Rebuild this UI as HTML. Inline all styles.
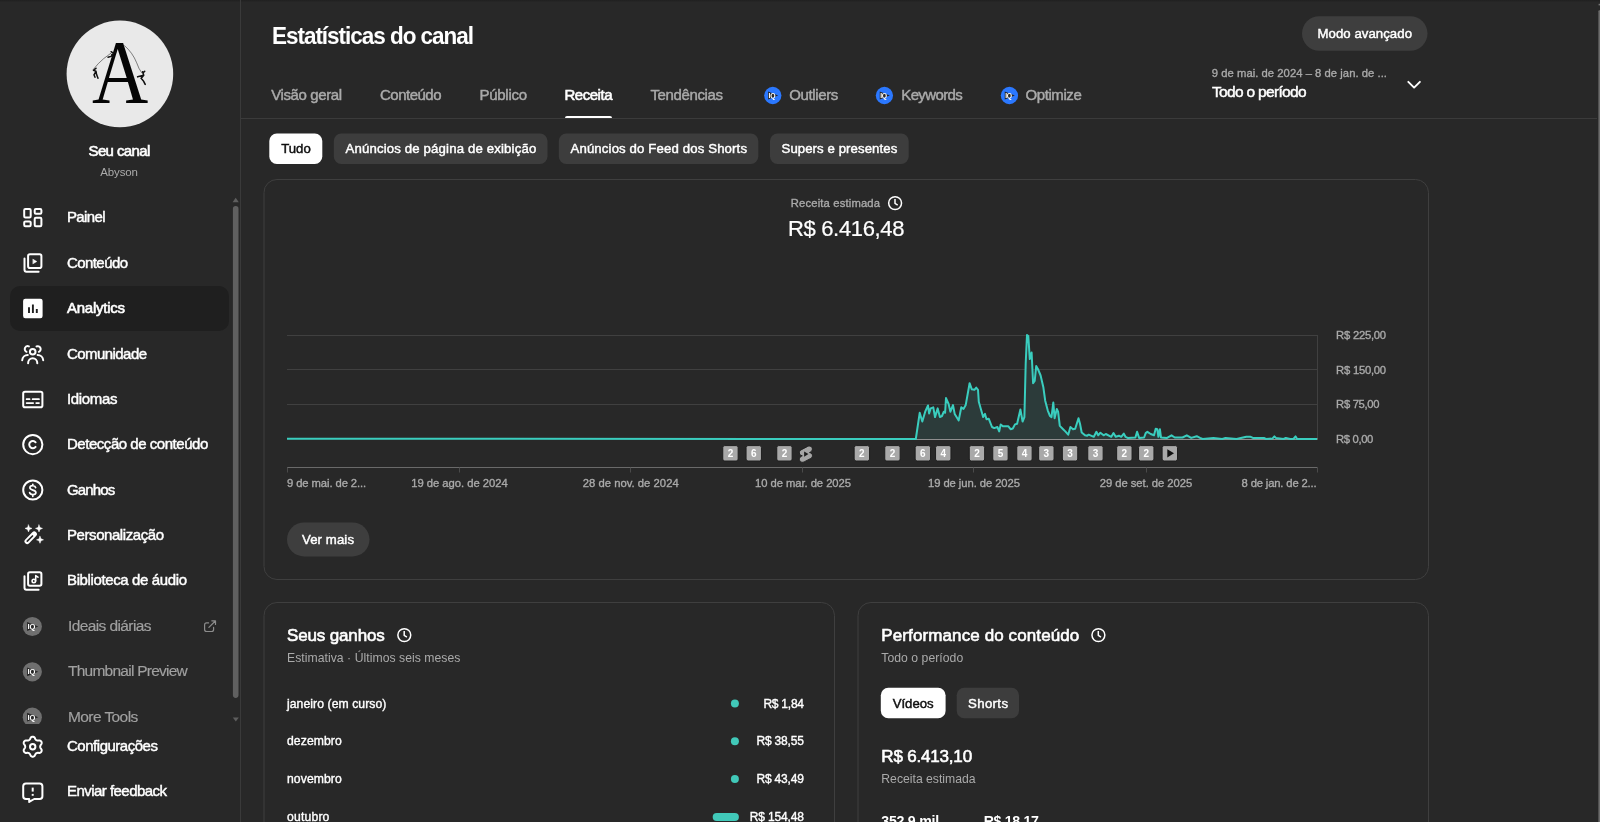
<!DOCTYPE html>
<html lang="pt-BR">
<head>
<meta charset="utf-8">
<title>Estatísticas do canal</title>
<style>
*{box-sizing:border-box;margin:0;padding:0}
html,body{width:1600px;height:822px;overflow:hidden;background:#282828;color:#fff;font-family:"Liberation Sans",sans-serif}
body{position:relative}
#wrap{position:absolute;left:0;top:0;width:1600px;height:822px;overflow:hidden;will-change:transform}
.abs{position:absolute}
.t{position:absolute;white-space:nowrap}
.chip{position:absolute;border-radius:8px;background:#3d3d3d}
.card{position:absolute;border:1px solid #3f3f3f;border-radius:12px}
svg{position:absolute;left:0;top:0;overflow:visible}
.mk rect{fill:#a9a9a9;stroke:#1e1e1e;stroke-width:1}
.mk text{fill:#fff;font-family:"Liberation Sans",sans-serif;font-weight:bold;font-size:10px;text-anchor:middle}
</style>
</head>
<body>
<div id="wrap">

<!-- top shadow -->
<div class="abs" style="left:0;top:0;width:1600px;height:2px;background:linear-gradient(#202020,#272727)"></div>
<!-- page scrollbar -->
<svg width="1600" height="822"><rect x="1598.4" y="10.2" width="3" height="830" rx="1" fill="#6c6c6c"/><rect x="1598.6" y="3.8" width="1.4" height="1.6" fill="#777"/></svg>

<!-- SIDEBAR -->
<div class="abs" style="left:240px;top:0;width:1px;height:822px;background:#3a3a3a"></div>
<div class="abs" style="left:10px;top:286px;width:219px;height:45px;border-radius:10px;background:#1f1f1f"></div>
<svg width="240" height="140"><circle cx="119.9" cy="73.9" r="53.3" fill="#e9e9e9"/></svg>
<div class="abs" style="left:66.6px;top:20.6px;width:106.6px;height:106.6px;border-radius:50%;overflow:hidden">
  <div class="t" style="left:13.4px;top:2.2px;width:80px;text-align:center;font-family:'Liberation Serif',serif;font-size:90px;line-height:100px;color:#050505;transform:scaleX(0.865);transform-origin:50% 50%">A</div>
  <svg width="107" height="107" viewBox="66.6 20.4 106.6 106.6" fill="none" stroke="#111" stroke-linecap="round">
    <path d="M92.5 69 Q98 62 103 58 Q107 55 111 52" stroke-width="0.5"/>
    <path d="M124 45 Q132 52 136 62 Q138 68 141 72" stroke-width="0.5"/>
    <path d="M93 69.5 l2.5 1 l0.5 3 l1.5 4 M95.5 70.5 l-2 3.5 l1 2.5 M94 68.5 l1.5 -1" stroke-width="1.5"/>
    <path d="M110.5 51 l2.5 1.5 l-2 3 l-3.5 1 M113 52.5 l2.5 -1.5 M111 54 l2 2.5" stroke-width="1.4"/>
    <path d="M142 71 l1 3.5 l-2.5 3 l2.5 3 l1.5 3 M143 74.5 l-6 1.5 M142.5 72 l1.5 -1.5" stroke-width="1.6"/>
  </svg>
</div>

<!-- sidebar scrollbar -->
<svg width="240" height="822">
  <rect x="232.9" y="205.9" width="5.6" height="492" rx="2.8" fill="#606060"/>
  <path d="M232.6 202.3 L235.7 197.7 L238.8 202.3 Z" fill="#5e5e5e"/>
  <path d="M232.8 717.4 L238.8 717.4 L235.8 721.6 Z" fill="#5e5e5e"/>
</svg>

<!-- sidebar icons -->
<svg width="240" height="822" fill="none" stroke="#fff" stroke-width="2" stroke-linejoin="round" stroke-linecap="round">
  <!-- painel -->
  <rect x="24.2" y="209" width="6.5" height="8.5" rx="1.2"/>
  <rect x="34.7" y="209" width="6.7" height="4.8" rx="1.2"/>
  <rect x="24.2" y="221.4" width="6.5" height="4.8" rx="1.2"/>
  <rect x="34.7" y="217.7" width="6.7" height="8.5" rx="1.2"/>
  <!-- conteudo -->
  <rect x="28.1" y="254.2" width="13.3" height="13.8" rx="1.8"/>
  <path d="M24.5 258.4 V269.7 a2 2 0 0 0 2 2 H38.6"/>
  <path d="M33.1 259.3 L36.8 261.5 L33.1 263.7 Z" fill="#fff" stroke-width="0.5"/>
  <!-- analytics -->
  <rect x="23.1" y="298.8" width="19.5" height="19.4" rx="2.2" fill="#fff" stroke="none"/>
  <path d="M29 313 V307.2 M32.9 313 V304.6 M36.8 313 V309" stroke="#1f1f1f" stroke-width="1.9" stroke-linecap="butt"/>
  <!-- comunidade -->
  <circle cx="32.7" cy="351.7" r="2.8"/>
  <path d="M28.1 363.2 a4.6 5 0 0 1 9.2 0"/>
  <path d="M28.9 346.4 a2.9 2.9 0 1 0 -2.4 5.4"/>
  <path d="M36.5 346.4 a2.9 2.9 0 1 1 2.4 5.4"/>
  <path d="M22.2 360.2 a5.6 5.6 0 0 1 5.6 -5.2"/>
  <path d="M43.2 360.2 a5.6 5.6 0 0 0 -5.6 -5.2"/>
  <!-- idiomas -->
  <rect x="23.2" y="391.7" width="19.2" height="15.5" rx="1.8"/>
  <path d="M26.6 399.2 H29.6 M32.6 399.2 H39 M26.6 403.1 H33.2 M36.2 403.1 H39" stroke-width="1.7"/>
  <!-- copyright -->
  <circle cx="32.8" cy="444.6" r="9.6"/>
  <path d="M35.6 442.3 a3.6 3.6 0 1 0 0 4.6"/>
  <!-- ganhos -->
  <circle cx="32.8" cy="490" r="9.6"/>
  <path d="M35.6 487.6 c-0.4 -1.4 -1.8 -1.9 -2.9 -1.9 c-1.6 0 -2.8 0.8 -2.8 2.1 c0 3 6 1.6 6 4.7 c0 1.4 -1.4 2.2 -3.1 2.2 c-1.5 0 -2.8 -0.7 -3.2 -2.1 M32.8 484.3 V485.6 M32.8 494.8 V496.3" stroke-width="1.7"/>
  <!-- personalizacao -->
  <path d="M27.2 541.3 L34.2 534.2" stroke-width="5.4"/>
  <path d="M27.3 541.2 L32.5 536" stroke="#282828" stroke-width="1.7" stroke-linecap="round"/>
  <path d="M28.50 524.90 L29.49 527.41 L32.00 528.40 L29.49 529.39 L28.50 531.90 L27.51 529.39 L25.00 528.40 L27.51 527.41 Z" fill="#fff" stroke-width="0.5"/>
  <path d="M39.00 524.90 L39.99 527.41 L42.50 528.40 L39.99 529.39 L39.00 531.90 L38.01 529.39 L35.50 528.40 L38.01 527.41 Z" fill="#fff" stroke-width="0.5"/>
  <path d="M40.00 536.30 L40.99 538.81 L43.50 539.80 L40.99 540.79 L40.00 543.30 L39.01 540.79 L36.50 539.80 L39.01 538.81 Z" fill="#fff" stroke-width="0.5"/>
  <!-- biblioteca -->
  <rect x="28.1" y="572.2" width="13.3" height="13.6" rx="1.8"/>
  <path d="M24.5 576.2 V587.7 a2 2 0 0 0 2 2 H38.6"/>
  <circle cx="33.8" cy="581" r="1.7" stroke-width="1.6"/>
  <path d="M35.7 581 V575.6 L38 577.2" stroke-width="1.5"/>
  <!-- gear -->
  <path d="M40.20 746.70 L40.23 747.09 L40.33 747.50 L40.49 747.93 L40.72 748.40 L41.15 748.96 L41.54 749.57 L41.67 750.14 L41.68 750.70 L41.57 751.22 L41.36 751.70 L41.05 752.12 L40.65 752.48 L40.17 752.75 L39.61 752.92 L38.89 752.89 L38.19 752.79 L37.66 752.83 L37.21 752.91 L36.81 753.03 L36.45 753.20 L36.12 753.42 L35.82 753.71 L35.53 754.06 L35.23 754.50 L34.96 755.15 L34.63 755.80 L34.20 756.19 L33.73 756.47 L33.22 756.64 L32.70 756.70 L32.18 756.64 L31.67 756.47 L31.20 756.19 L30.77 755.80 L30.44 755.15 L30.17 754.50 L29.87 754.06 L29.58 753.71 L29.28 753.42 L28.95 753.20 L28.59 753.03 L28.19 752.91 L27.74 752.83 L27.21 752.79 L26.51 752.89 L25.79 752.92 L25.23 752.75 L24.75 752.48 L24.35 752.12 L24.04 751.70 L23.83 751.22 L23.72 750.70 L23.73 750.14 L23.86 749.57 L24.25 748.96 L24.68 748.40 L24.91 747.93 L25.07 747.50 L25.17 747.09 L25.20 746.70 L25.17 746.31 L25.07 745.90 L24.91 745.47 L24.68 745.00 L24.25 744.44 L23.86 743.83 L23.73 743.26 L23.72 742.70 L23.83 742.18 L24.04 741.70 L24.35 741.28 L24.75 740.92 L25.23 740.65 L25.79 740.48 L26.51 740.51 L27.21 740.61 L27.74 740.57 L28.19 740.49 L28.59 740.37 L28.95 740.20 L29.28 739.98 L29.58 739.69 L29.87 739.34 L30.17 738.90 L30.44 738.25 L30.77 737.60 L31.20 737.21 L31.67 736.93 L32.18 736.76 L32.70 736.70 L33.22 736.76 L33.73 736.93 L34.20 737.21 L34.63 737.60 L34.96 738.25 L35.23 738.90 L35.53 739.34 L35.82 739.69 L36.12 739.98 L36.45 740.20 L36.81 740.37 L37.21 740.49 L37.66 740.57 L38.19 740.61 L38.89 740.51 L39.61 740.48 L40.17 740.65 L40.65 740.92 L41.05 741.28 L41.36 741.70 L41.57 742.18 L41.68 742.70 L41.67 743.26 L41.54 743.83 L41.15 744.44 L40.72 745.00 L40.49 745.47 L40.33 745.90 L40.23 746.31 Z"/>
  <circle cx="32.7" cy="746.7" r="2.7"/>
  <!-- feedback -->
  <path d="M26 783.5 H39.6 a2.8 2.8 0 0 1 2.8 2.8 V796.2 a2.8 2.8 0 0 1 -2.8 2.8 H34.2 L29.2 801.9 V799 H26 a2.8 2.8 0 0 1 -2.8 -2.8 V786.3 a2.8 2.8 0 0 1 2.8 -2.8 Z"/>
  <path d="M32.7 787.6 V791.6" stroke-linecap="butt"/>
  <path d="M32.7 793.9 V795.8" stroke-linecap="butt"/>
  <!-- external link -->
  <g stroke="#8c8c8c" stroke-width="1.2">
    <path d="M208.6 622.9 H206.6 a2 2 0 0 0 -2 2 V629.5 a2 2 0 0 0 2 2 H211.6 a2 2 0 0 0 2 -2 V627.4"/>
    <path d="M208.9 627.4 L215.3 621 M211.8 620.8 H215.5 V624.5"/>
  </g>
</svg>
<!-- IQ grey icons (clipped list) -->
<div class="abs" style="left:0;top:0;width:240px;height:724px;overflow:hidden">
<svg width="240" height="822">
<circle cx="32.3" cy="626.5" r="9.60" fill="#6f6f6f"/>
<path d="M27.10 622.10 L38.30 626.5 L27.10 630.90 Z" fill="#262626"/>
<text x="31.40" y="629.00" font-family="Liberation Sans,sans-serif" font-weight="bold" font-size="7.60" fill="#fff" text-anchor="middle" letter-spacing="-0.2">IQ</text>
<circle cx="32.3" cy="671.8" r="9.60" fill="#6f6f6f"/>
<path d="M27.10 667.40 L38.30 671.8 L27.10 676.20 Z" fill="#262626"/>
<text x="31.40" y="674.30" font-family="Liberation Sans,sans-serif" font-weight="bold" font-size="7.60" fill="#fff" text-anchor="middle" letter-spacing="-0.2">IQ</text>
<circle cx="32.3" cy="717.2" r="9.60" fill="#6f6f6f"/>
<path d="M27.10 712.80 L38.30 717.2 L27.10 721.60 Z" fill="#262626"/>
<text x="31.40" y="719.70" font-family="Liberation Sans,sans-serif" font-weight="bold" font-size="7.60" fill="#fff" text-anchor="middle" letter-spacing="-0.2">IQ</text>
</svg>
</div>

<!-- HEADER shapes -->
<svg width="1600" height="60"><rect x="1302" y="16.3" width="125.5" height="34.4" rx="17.2" fill="#3e3e3e"/></svg>
<div class="abs" style="left:564.5px;top:116px;width:47.5px;height:2.5px;background:#fff;border-radius:2px 2px 0 0"></div>
<div class="abs" style="left:241px;top:118px;width:1356px;height:1px;background:#3b3b3b"></div>
<svg width="1600" height="130">
<circle cx="772.8" cy="95.5" r="8.64" fill="#2b78ff"/>
<path d="M768.12 91.54 L778.20 95.5 L768.12 99.46 Z" fill="#262626"/>
<text x="771.99" y="97.75" font-family="Liberation Sans,sans-serif" font-weight="bold" font-size="6.84" fill="#fff" text-anchor="middle" letter-spacing="-0.2">IQ</text>
<circle cx="884.4" cy="95.5" r="8.64" fill="#2b78ff"/>
<path d="M879.72 91.54 L889.80 95.5 L879.72 99.46 Z" fill="#262626"/>
<text x="883.59" y="97.75" font-family="Liberation Sans,sans-serif" font-weight="bold" font-size="6.84" fill="#fff" text-anchor="middle" letter-spacing="-0.2">IQ</text>
<circle cx="1009.4" cy="95.5" r="8.64" fill="#2b78ff"/>
<path d="M1004.72 91.54 L1014.80 95.5 L1004.72 99.46 Z" fill="#262626"/>
<text x="1008.59" y="97.75" font-family="Liberation Sans,sans-serif" font-weight="bold" font-size="6.84" fill="#fff" text-anchor="middle" letter-spacing="-0.2">IQ</text>
<path d="M1408.3 81.8 L1414.1 87.6 L1419.9 81.8" fill="none" stroke="#fff" stroke-width="1.9" stroke-linecap="round" stroke-linejoin="round"/>
</svg>

<!-- chips -->
<svg width="1600" height="822" fill="#3d3d3d">
<rect x="269.3" y="133.6" width="53" height="30.4" rx="7.5" fill="#fff"/>
<rect x="333.8" y="133.6" width="213.7" height="30.4" rx="7.5"/>
<rect x="558.8" y="133.6" width="199.5" height="30.4" rx="7.5"/>
<rect x="770" y="133.6" width="138.7" height="30.4" rx="7.5"/>
<rect x="880.8" y="687.8" width="64.8" height="30.5" rx="7.5" fill="#fff"/>
<rect x="956.7" y="687.8" width="62.3" height="30.5" rx="7.5"/>
</svg>

<!-- chart card -->
<svg width="1600" height="822" fill="none" stroke="#3f3f3f" stroke-width="1"><rect x="264" y="179.5" width="1164.5" height="400" rx="13"/><rect x="264" y="602.5" width="570.5" height="260" rx="13"/><rect x="858" y="602.5" width="570.5" height="260" rx="13"/></svg>
<svg width="1600" height="600"><rect x="287" y="522.4" width="82.5" height="34" rx="17" fill="#3e3e3e"/></svg>
<svg width="1600" height="600">
  <g stroke="#404040" stroke-width="1">
    <path d="M287 335.5 H1317.5 M287 369.5 H1317.5 M287 404.5 H1317.5 M1317.5 335 V439"/>
  </g>
  <path d="M915 439.1 H1317.5" stroke="#8e8e8e" stroke-width="2"/>
  <path d="M915.8 439.0 L919.7 412.8 L922.3 421.5 L925.2 411.7 L928.0 405.5 L929.1 413.4 L930.7 408.4 L933.3 407.3 L935.0 417.1 L937.7 408.4 L939.9 417.1 L942.0 416.0 L943.8 411.7 L945.1 412.8 L946.0 398.1 L948.6 404.0 L950.4 411.7 L953.0 405.1 L954.7 413.9 L958.7 420.4 L961.3 407.3 L963.5 409.0 L965.7 405.1 L969.6 383.2 L971.8 389.3 L974.4 389.8 L976.2 387.6 L978.0 389.8 L978.8 401.8 L981.0 409.5 L983.2 417.1 L985.0 413.9 L986.5 419.3 L988.7 418.7 L992.0 427.0 L994.2 428.1 L997.4 427.0 L999.2 431.4 L1000.7 424.4 L1002.9 426.3 L1008.4 426.3 L1010.6 429.2 L1012.8 428.5 L1015.0 424.4 L1017.1 423.7 L1020.4 409.5 L1022.6 421.5 L1024.4 417.1 L1025.7 363.5 L1027.0 335.0 L1028.3 336.1 L1029.8 359.1 L1031.6 352.5 L1033.1 383.2 L1034.7 381.0 L1036.2 366.1 L1037.9 369.0 L1040.6 375.5 L1043.4 387.6 L1045.2 400.7 L1047.8 410.6 L1050.0 416.0 L1051.5 417.1 L1053.3 402.5 L1054.6 418.2 L1056.8 409.0 L1058.1 411.7 L1059.8 425.9 L1063.1 429.2 L1065.3 431.4 L1068.2 434.7 L1070.4 427.0 L1073.0 429.2 L1075.2 428.7 L1078.5 418.2 L1080.0 423.7 L1081.7 432.5 L1085.0 435.3 L1087.2 435.7 L1088.7 434.7 L1093.8 436.8 L1096.4 431.8 L1098.2 435.3 L1100.4 432.7 L1103.6 435.3 L1105.8 434.0 L1111.3 436.8 L1113.5 433.1 L1115.7 436.8 L1119.0 435.7 L1121.2 436.8 L1123.8 433.6 L1125.5 436.8 L1127.7 437.9 L1135.4 437.5 L1137.1 431.8 L1139.1 437.9 L1144.1 437.5 L1145.7 433.1 L1147.4 431.8 L1150.7 434.0 L1154.0 435.3 L1155.7 428.7 L1157.3 429.2 L1158.4 436.8 L1159.9 429.2 L1161.0 437.5 L1167.1 437.9 L1171.5 435.3 L1174.8 437.5 L1182.5 437.5 L1186.8 435.3 L1191.2 437.9 L1196.7 436.2 L1200.0 437.9 L1202.6 439.0 L1213.5 437.9 L1222.3 439.0 L1225.5 437.9 L1236.5 439.0 L1246.3 436.8 L1250.7 436.8 L1252.9 437.9 L1263.9 437.9 L1266.0 439.0 L1272.6 438.4 L1274.4 436.4 L1275.9 437.9 L1283.6 439.0 L1285.8 437.9 L1290.1 439.0 L1293.4 439.0 L1295.6 436.4 L1297.1 439.0 L1317 439.0 L1317 439 L915.8 439 Z" fill="#2c3b3a"/>
  <polyline points="287,438.7 915.8,439.0 919.7,412.8 922.3,421.5 925.2,411.7 928.0,405.5 929.1,413.4 930.7,408.4 933.3,407.3 935.0,417.1 937.7,408.4 939.9,417.1 942.0,416.0 943.8,411.7 945.1,412.8 946.0,398.1 948.6,404.0 950.4,411.7 953.0,405.1 954.7,413.9 958.7,420.4 961.3,407.3 963.5,409.0 965.7,405.1 969.6,383.2 971.8,389.3 974.4,389.8 976.2,387.6 978.0,389.8 978.8,401.8 981.0,409.5 983.2,417.1 985.0,413.9 986.5,419.3 988.7,418.7 992.0,427.0 994.2,428.1 997.4,427.0 999.2,431.4 1000.7,424.4 1002.9,426.3 1008.4,426.3 1010.6,429.2 1012.8,428.5 1015.0,424.4 1017.1,423.7 1020.4,409.5 1022.6,421.5 1024.4,417.1 1025.7,363.5 1027.0,335.0 1028.3,336.1 1029.8,359.1 1031.6,352.5 1033.1,383.2 1034.7,381.0 1036.2,366.1 1037.9,369.0 1040.6,375.5 1043.4,387.6 1045.2,400.7 1047.8,410.6 1050.0,416.0 1051.5,417.1 1053.3,402.5 1054.6,418.2 1056.8,409.0 1058.1,411.7 1059.8,425.9 1063.1,429.2 1065.3,431.4 1068.2,434.7 1070.4,427.0 1073.0,429.2 1075.2,428.7 1078.5,418.2 1080.0,423.7 1081.7,432.5 1085.0,435.3 1087.2,435.7 1088.7,434.7 1093.8,436.8 1096.4,431.8 1098.2,435.3 1100.4,432.7 1103.6,435.3 1105.8,434.0 1111.3,436.8 1113.5,433.1 1115.7,436.8 1119.0,435.7 1121.2,436.8 1123.8,433.6 1125.5,436.8 1127.7,437.9 1135.4,437.5 1137.1,431.8 1139.1,437.9 1144.1,437.5 1145.7,433.1 1147.4,431.8 1150.7,434.0 1154.0,435.3 1155.7,428.7 1157.3,429.2 1158.4,436.8 1159.9,429.2 1161.0,437.5 1167.1,437.9 1171.5,435.3 1174.8,437.5 1182.5,437.5 1186.8,435.3 1191.2,437.9 1196.7,436.2 1200.0,437.9 1202.6,439.0 1213.5,437.9 1222.3,439.0 1225.5,437.9 1236.5,439.0 1246.3,436.8 1250.7,436.8 1252.9,437.9 1263.9,437.9 1266.0,439.0 1272.6,438.4 1274.4,436.4 1275.9,437.9 1283.6,439.0 1285.8,437.9 1290.1,439.0 1293.4,439.0 1295.6,436.4 1297.1,439.0 1317,439.0" fill="none" stroke="#3acdbe" stroke-width="2" stroke-linejoin="round"/>
  <path d="M287 467.5 H1317.5" stroke="#6a6a6a" stroke-width="1"/>
  <path d="M287.50 467.5 V472.5" stroke="#4a4a4a" stroke-width="1"/><path d="M459.50 467.5 V472.5" stroke="#4a4a4a" stroke-width="1"/><path d="M630.50 467.5 V472.5" stroke="#4a4a4a" stroke-width="1"/><path d="M802.50 467.5 V472.5" stroke="#4a4a4a" stroke-width="1"/><path d="M973.50 467.5 V472.5" stroke="#4a4a4a" stroke-width="1"/><path d="M1146.50 467.5 V472.5" stroke="#4a4a4a" stroke-width="1"/><path d="M1317.50 467.5 V472.5" stroke="#4a4a4a" stroke-width="1"/>
  <g class="mk"><rect x="722.75" y="445.6" width="15.4" height="15.4" rx="2"/><text x="730.50" y="457">2</text></g>
<g class="mk"><rect x="746.05" y="445.6" width="15.4" height="15.4" rx="2"/><text x="753.80" y="457">6</text></g>
<g class="mk"><rect x="776.75" y="445.6" width="15.4" height="15.4" rx="2"/><text x="784.50" y="457">2</text></g>
<g class="mk"><rect x="854.15" y="445.6" width="15.4" height="15.4" rx="2"/><text x="861.90" y="457">2</text></g>
<g class="mk"><rect x="884.75" y="445.6" width="15.4" height="15.4" rx="2"/><text x="892.50" y="457">2</text></g>
<g class="mk"><rect x="915.15" y="445.6" width="15.4" height="15.4" rx="2"/><text x="922.90" y="457">6</text></g>
<g class="mk"><rect x="935.55" y="445.6" width="15.4" height="15.4" rx="2"/><text x="943.30" y="457">4</text></g>
<g class="mk"><rect x="969.25" y="445.6" width="15.4" height="15.4" rx="2"/><text x="977.00" y="457">2</text></g>
<g class="mk"><rect x="992.75" y="445.6" width="15.4" height="15.4" rx="2"/><text x="1000.50" y="457">5</text></g>
<g class="mk"><rect x="1016.75" y="445.6" width="15.4" height="15.4" rx="2"/><text x="1024.50" y="457">4</text></g>
<g class="mk"><rect x="1038.65" y="445.6" width="15.4" height="15.4" rx="2"/><text x="1046.40" y="457">3</text></g>
<g class="mk"><rect x="1062.35" y="445.6" width="15.4" height="15.4" rx="2"/><text x="1070.10" y="457">3</text></g>
<g class="mk"><rect x="1087.75" y="445.6" width="15.4" height="15.4" rx="2"/><text x="1095.50" y="457">3</text></g>
<g class="mk"><rect x="1116.65" y="445.6" width="15.4" height="15.4" rx="2"/><text x="1124.40" y="457">2</text></g>
<g class="mk"><rect x="1138.55" y="445.6" width="15.4" height="15.4" rx="2"/><text x="1146.30" y="457">2</text></g>
<g class="mk"><rect x="1162.1" y="445.6" width="15.4" height="15.4" rx="2"/><path d="M1167.3 449.2 L1174 453.3 L1167.3 457.4 Z" fill="#111"/></g>
<g transform="translate(799.3,445.8) scale(0.66)"><path d="M12.7 0.9 C15.1 -0.4 18 0.5 19.3 2.8 C20.5 5.1 19.7 7.9 17.4 9.2 L15.5 10.2 C17.1 10.3 18.6 11.2 19.4 12.7 C20.6 15 19.7 17.9 17.4 19.1 L7.3 24.4 C4.9 25.7 2 24.8 0.7 22.5 C-0.5 20.2 0.3 17.3 2.6 16.1 L4.5 15.1 C2.9 15 1.4 14.1 0.6 12.6 C-0.6 10.3 0.3 7.4 2.6 6.2 Z" fill="#a6a6a6" stroke="#1e1e1e" stroke-width="1.4"/><path d="M7.3 8.6 L13.8 12.6 L7.3 16.6 Z" fill="#1e1e1e"/></g>
  <g fill="none" stroke="#fff" stroke-width="1.5"><circle cx="895.1" cy="203.1" r="6.45"/><path d="M895.0 199.0 V203.4 L897.7 205.1" stroke-linejoin="round"/></g>
</svg>

<!-- bottom cards -->
<svg width="1600" height="822">
  <g fill="none" stroke="#fff" stroke-width="1.5"><circle cx="404.3" cy="635.1" r="6.45"/><path d="M404.2 631.0 V635.4 L406.90000000000003 637.1" stroke-linejoin="round"/></g>
  <g fill="none" stroke="#fff" stroke-width="1.5"><circle cx="1098.4" cy="635.1" r="6.45"/><path d="M1098.3000000000002 631.0 V635.4 L1101.0 637.1" stroke-linejoin="round"/></g>
  <circle cx="734.9" cy="703.4" r="4" fill="#41c9b9"/>
  <circle cx="734.9" cy="741.2" r="4" fill="#41c9b9"/>
  <circle cx="734.9" cy="779" r="4" fill="#41c9b9"/>
  <rect x="712.7" y="812.9" width="26.2" height="8" rx="4" fill="#41c9b9"/>
</svg>
<div class="t" style="left:88.53px;top:142px;font-size:15px;line-height:18px;color:#fff;letter-spacing:-0.621px;-webkit-text-stroke:0.6px #fff;">Seu canal</div>
<div class="t" style="left:100.22px;top:165px;font-size:11.5px;line-height:14px;color:#aaa;letter-spacing:-0.122px;">Abyson</div>
<div class="t" style="left:67.00px;top:208px;font-size:15px;line-height:18px;color:#fff;letter-spacing:-0.641px;-webkit-text-stroke:0.45px #fff;">Painel</div>
<div class="t" style="left:67.00px;top:254px;font-size:15px;line-height:18px;color:#fff;letter-spacing:-0.580px;-webkit-text-stroke:0.45px #fff;">Conteúdo</div>
<div class="t" style="left:67.00px;top:299px;font-size:15px;line-height:18px;color:#fff;letter-spacing:-0.254px;-webkit-text-stroke:0.6px #fff;">Analytics</div>
<div class="t" style="left:67.00px;top:345px;font-size:15px;line-height:18px;color:#fff;letter-spacing:-0.562px;-webkit-text-stroke:0.45px #fff;">Comunidade</div>
<div class="t" style="left:67.00px;top:390px;font-size:15px;line-height:18px;color:#fff;letter-spacing:-0.339px;-webkit-text-stroke:0.45px #fff;">Idiomas</div>
<div class="t" style="left:67.00px;top:435px;font-size:15px;line-height:18px;color:#fff;letter-spacing:-0.467px;-webkit-text-stroke:0.45px #fff;">Detecção de conteúdo</div>
<div class="t" style="left:67.00px;top:481px;font-size:15px;line-height:18px;color:#fff;letter-spacing:-0.859px;-webkit-text-stroke:0.45px #fff;">Ganhos</div>
<div class="t" style="left:67.00px;top:526px;font-size:15px;line-height:18px;color:#fff;letter-spacing:-0.428px;-webkit-text-stroke:0.45px #fff;">Personalização</div>
<div class="t" style="left:67.00px;top:571px;font-size:15px;line-height:18px;color:#fff;letter-spacing:-0.376px;-webkit-text-stroke:0.45px #fff;">Biblioteca de áudio</div>
<div class="t" style="left:68.00px;top:616px;font-size:15.5px;line-height:19px;color:#a0a0a0;letter-spacing:-0.602px;-webkit-text-stroke:0.17px #a0a0a0;">Ideais diárias</div>
<div class="t" style="left:68.00px;top:661px;font-size:15.5px;line-height:19px;color:#a0a0a0;letter-spacing:-0.754px;-webkit-text-stroke:0.17px #a0a0a0;">Thumbnail Preview</div>
<div class="t" style="left:67.00px;top:737px;font-size:15px;line-height:18px;color:#fff;letter-spacing:-0.478px;-webkit-text-stroke:0.45px #fff;">Configurações</div>
<div class="t" style="left:67.00px;top:782px;font-size:15px;line-height:18px;color:#fff;letter-spacing:-0.541px;-webkit-text-stroke:0.45px #fff;">Enviar feedback</div>
<div class="t" style="left:272.00px;top:23px;font-size:22.5px;line-height:27px;color:#fff;letter-spacing:-1.030px;font-weight:bold;transform:scaleY(1.06);transform-origin:0 21px;">Estatísticas do canal</div>
<div class="t" style="left:1317.50px;top:26px;font-size:13.2px;line-height:16px;color:#fff;letter-spacing:0.053px;-webkit-text-stroke:0.45px #fff;">Modo avançado</div>
<div class="t" style="left:271.25px;top:86px;font-size:15px;line-height:18px;color:#aaa;letter-spacing:-0.403px;-webkit-text-stroke:0.45px #aaa;">Visão geral</div>
<div class="t" style="left:380.00px;top:86px;font-size:15px;line-height:18px;color:#aaa;letter-spacing:-0.509px;-webkit-text-stroke:0.45px #aaa;">Conteúdo</div>
<div class="t" style="left:479.50px;top:86px;font-size:15px;line-height:18px;color:#aaa;letter-spacing:-0.284px;-webkit-text-stroke:0.45px #aaa;">Público</div>
<div class="t" style="left:564.50px;top:86px;font-size:15px;line-height:18px;color:#fff;letter-spacing:-0.477px;-webkit-text-stroke:0.6px #fff;">Receita</div>
<div class="t" style="left:650.50px;top:86px;font-size:15px;line-height:18px;color:#aaa;letter-spacing:-0.377px;-webkit-text-stroke:0.45px #aaa;">Tendências</div>
<div class="t" style="left:789.25px;top:86px;font-size:15px;line-height:18px;color:#aaa;letter-spacing:-0.384px;-webkit-text-stroke:0.45px #aaa;">Outliers</div>
<div class="t" style="left:901.25px;top:86px;font-size:15px;line-height:18px;color:#aaa;letter-spacing:-0.623px;-webkit-text-stroke:0.45px #aaa;">Keywords</div>
<div class="t" style="left:1025.50px;top:86px;font-size:15px;line-height:18px;color:#aaa;letter-spacing:-0.420px;-webkit-text-stroke:0.45px #aaa;">Optimize</div>
<div class="t" style="left:1211.75px;top:66px;font-size:11.25px;line-height:14px;color:#aaa;letter-spacing:0.039px;-webkit-text-stroke:0.34px #aaa;">9 de mai. de 2024 – 8 de jan. de ...</div>
<div class="t" style="left:1212.00px;top:82px;font-size:15.5px;line-height:19px;color:#fff;letter-spacing:-0.686px;-webkit-text-stroke:0.46px #fff;">Todo o período</div>
<div class="t" style="left:281.25px;top:141px;font-size:13.2px;line-height:16px;color:#0f0f0f;letter-spacing:-0.026px;-webkit-text-stroke:0.45px #0f0f0f;">Tudo</div>
<div class="t" style="left:345.50px;top:141px;font-size:13.2px;line-height:16px;color:#fff;letter-spacing:0.156px;-webkit-text-stroke:0.45px #fff;">Anúncios de página de exibição</div>
<div class="t" style="left:570.50px;top:141px;font-size:13.2px;line-height:16px;color:#fff;letter-spacing:0.134px;-webkit-text-stroke:0.45px #fff;">Anúncios do Feed dos Shorts</div>
<div class="t" style="left:781.50px;top:141px;font-size:13.2px;line-height:16px;color:#fff;letter-spacing:0.081px;-webkit-text-stroke:0.45px #fff;">Supers e presentes</div>
<div class="t" style="left:790.75px;top:196px;font-size:11.25px;line-height:14px;color:#aaa;letter-spacing:0.155px;-webkit-text-stroke:0.34px #aaa;">Receita estimada</div>
<div class="t" style="left:788.00px;top:215px;font-size:22px;line-height:27px;color:#fff;letter-spacing:-0.338px;-webkit-text-stroke:0.24px #fff;">R$ 6.416,48</div>
<div class="t" style="left:302.00px;top:532px;font-size:13.2px;line-height:16px;color:#fff;letter-spacing:0.098px;-webkit-text-stroke:0.45px #fff;">Ver mais</div>
<div class="t" style="left:1336.10px;top:328px;font-size:11.25px;line-height:14px;color:#aaa;letter-spacing:-0.240px;-webkit-text-stroke:0.34px #aaa;">R$ 225,00</div>
<div class="t" style="left:1336.10px;top:363px;font-size:11.25px;line-height:14px;color:#aaa;letter-spacing:-0.240px;-webkit-text-stroke:0.34px #aaa;">R$ 150,00</div>
<div class="t" style="left:1336.10px;top:397px;font-size:11.25px;line-height:14px;color:#aaa;letter-spacing:-0.325px;-webkit-text-stroke:0.34px #aaa;">R$ 75,00</div>
<div class="t" style="left:1336.10px;top:432px;font-size:11.25px;line-height:14px;color:#aaa;letter-spacing:-0.368px;-webkit-text-stroke:0.34px #aaa;">R$ 0,00</div>
<div class="t" style="left:287.00px;top:476px;font-size:11.25px;line-height:14px;color:#aaa;letter-spacing:-0.090px;-webkit-text-stroke:0.34px #aaa;">9 de mai. de 2...</div>
<div class="t" style="left:411.25px;top:476px;font-size:11.25px;line-height:14px;color:#aaa;letter-spacing:-0.028px;-webkit-text-stroke:0.34px #aaa;">19 de ago. de 2024</div>
<div class="t" style="left:582.70px;top:476px;font-size:11.25px;line-height:14px;color:#aaa;letter-spacing:0.029px;-webkit-text-stroke:0.34px #aaa;">28 de nov. de 2024</div>
<div class="t" style="left:755.00px;top:476px;font-size:11.25px;line-height:14px;color:#aaa;letter-spacing:-0.056px;-webkit-text-stroke:0.34px #aaa;">10 de mar. de 2025</div>
<div class="t" style="left:928.00px;top:476px;font-size:11.25px;line-height:14px;color:#aaa;letter-spacing:-0.072px;-webkit-text-stroke:0.34px #aaa;">19 de jun. de 2025</div>
<div class="t" style="left:1099.70px;top:476px;font-size:11.25px;line-height:14px;color:#aaa;letter-spacing:-0.035px;-webkit-text-stroke:0.34px #aaa;">29 de set. de 2025</div>
<div class="t" style="left:1241.60px;top:476px;font-size:11.25px;line-height:14px;color:#aaa;letter-spacing:-0.160px;-webkit-text-stroke:0.34px #aaa;">8 de jan. de 2...</div>
<div class="t" style="left:287.00px;top:625px;font-size:17px;line-height:21px;color:#fff;letter-spacing:-0.145px;-webkit-text-stroke:0.6px #fff;">Seus ganhos</div>
<div class="t" style="left:287.00px;top:651px;font-size:12.2px;line-height:15px;color:#aaa;letter-spacing:0.046px;">Estimativa · Últimos seis meses</div>
<div class="t" style="left:287.00px;top:697px;font-size:12.2px;line-height:15px;color:#fff;letter-spacing:0.069px;-webkit-text-stroke:0.37px #fff;">janeiro (em curso)</div>
<div class="t" style="left:763.40px;top:697px;font-size:12px;line-height:15px;color:#fff;letter-spacing:-0.239px;-webkit-text-stroke:0.36px #fff;">R$ 1,84</div>
<div class="t" style="left:287.00px;top:734px;font-size:12.2px;line-height:15px;color:#fff;letter-spacing:0.085px;-webkit-text-stroke:0.37px #fff;">dezembro</div>
<div class="t" style="left:756.40px;top:734px;font-size:12px;line-height:15px;color:#fff;letter-spacing:-0.158px;-webkit-text-stroke:0.36px #fff;">R$ 38,55</div>
<div class="t" style="left:287.00px;top:772px;font-size:12.2px;line-height:15px;color:#fff;letter-spacing:0.085px;-webkit-text-stroke:0.37px #fff;">novembro</div>
<div class="t" style="left:756.40px;top:772px;font-size:12px;line-height:15px;color:#fff;letter-spacing:-0.158px;-webkit-text-stroke:0.36px #fff;">R$ 43,49</div>
<div class="t" style="left:287.00px;top:810px;font-size:12.2px;line-height:15px;color:#fff;letter-spacing:0.176px;-webkit-text-stroke:0.37px #fff;">outubro</div>
<div class="t" style="left:749.80px;top:810px;font-size:12px;line-height:15px;color:#fff;letter-spacing:-0.149px;-webkit-text-stroke:0.36px #fff;">R$ 154,48</div>
<div class="t" style="left:881.30px;top:625px;font-size:17px;line-height:21px;color:#fff;letter-spacing:0.108px;-webkit-text-stroke:0.6px #fff;">Performance do conteúdo</div>
<div class="t" style="left:881.30px;top:651px;font-size:12.2px;line-height:15px;color:#aaa;letter-spacing:0.045px;">Todo o período</div>
<div class="t" style="left:892.70px;top:696px;font-size:13.2px;line-height:16px;color:#0f0f0f;letter-spacing:-0.013px;-webkit-text-stroke:0.45px #0f0f0f;">Vídeos</div>
<div class="t" style="left:968.00px;top:696px;font-size:13.2px;line-height:16px;color:#fff;letter-spacing:0.375px;-webkit-text-stroke:0.45px #fff;">Shorts</div>
<div class="t" style="left:881.30px;top:746px;font-size:17px;line-height:21px;color:#fff;letter-spacing:-0.184px;-webkit-text-stroke:0.6px #fff;">R$ 6.413,10</div>
<div class="t" style="left:881.30px;top:772px;font-size:12.2px;line-height:15px;color:#aaa;letter-spacing:0.009px;">Receita estimada</div>
<div class="t" style="left:881.30px;top:812px;font-size:14.2px;line-height:18px;color:#fff;letter-spacing:-0.269px;font-weight:bold;">352,9 mil</div>
<div class="t" style="left:983.70px;top:812px;font-size:14.2px;line-height:18px;color:#fff;letter-spacing:-0.328px;font-weight:bold;">R$ 18,17</div>
<div class="abs" style="left:0;top:0;width:240px;height:724px;overflow:hidden"><div class="t" style="left:68.00px;top:707px;font-size:15.5px;line-height:19px;color:#a0a0a0;letter-spacing:-0.587px;-webkit-text-stroke:0.17px #a0a0a0;">More Tools</div></div>

</div>
</body>
</html>
